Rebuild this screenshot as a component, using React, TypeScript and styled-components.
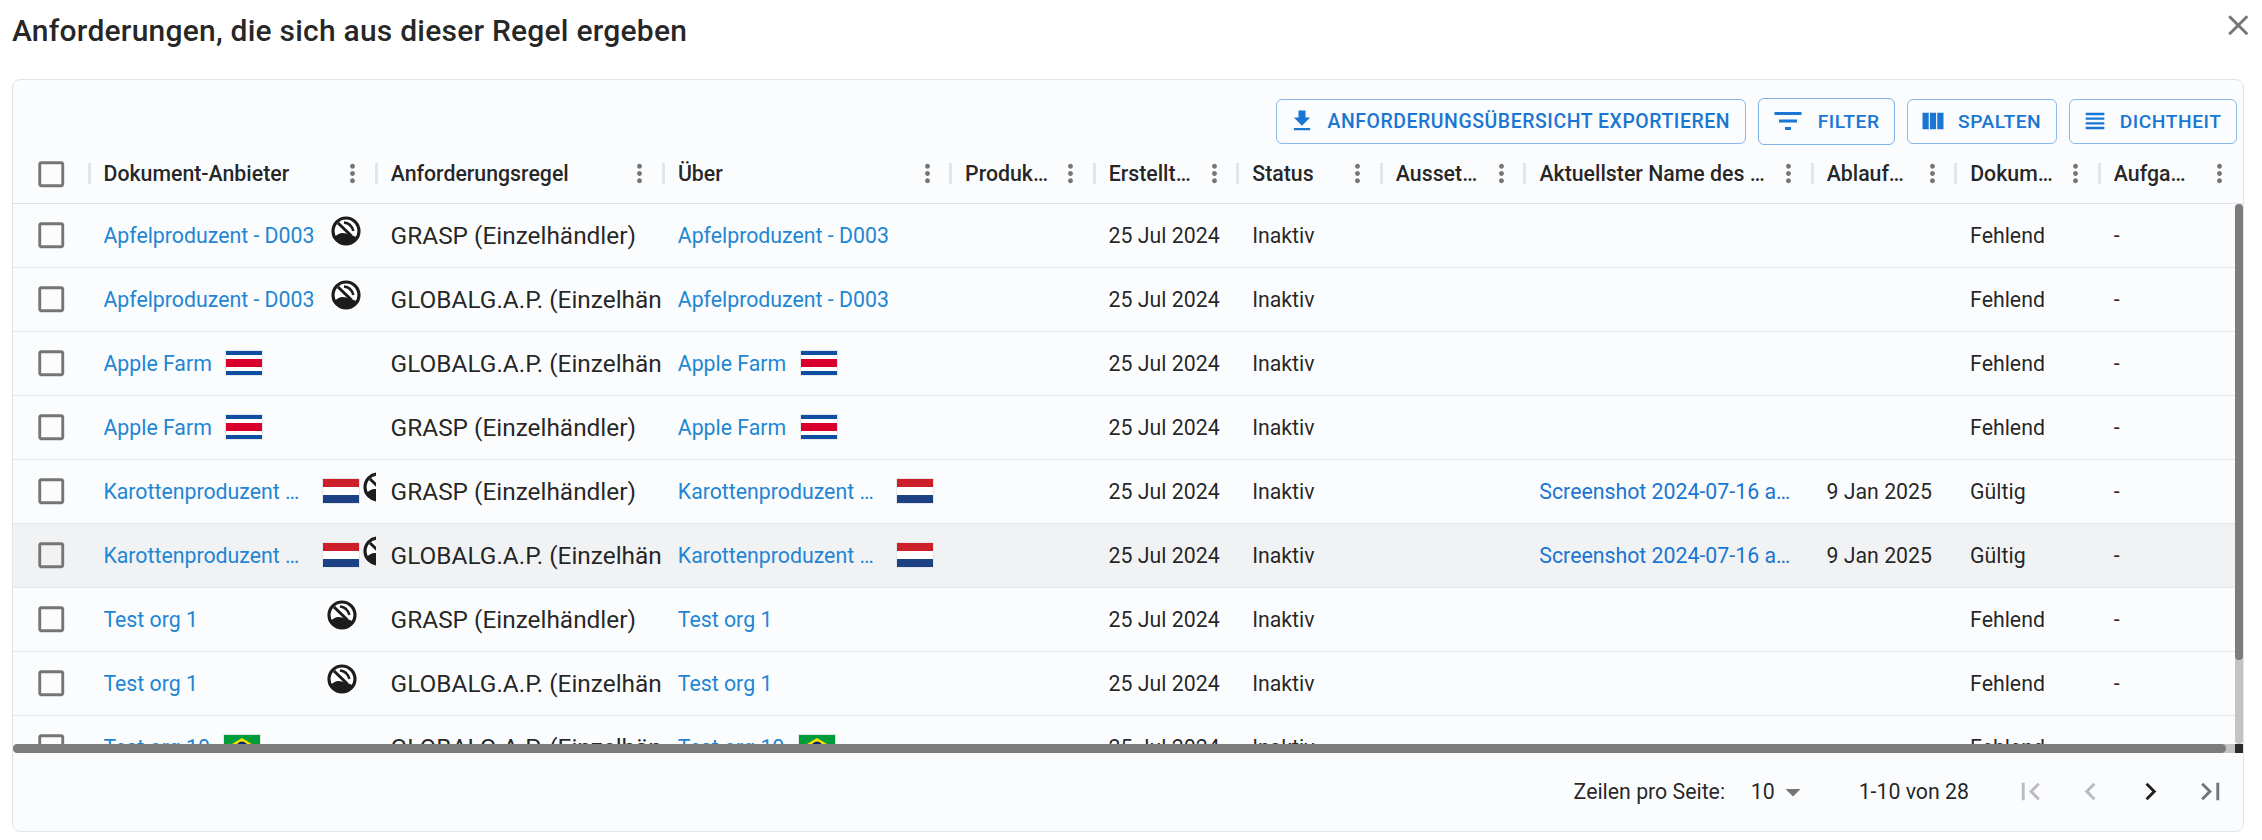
import styled, { createGlobalStyle } from 'styled-components'

const GlobalStyle = createGlobalStyle`
  html, body {
    margin: 0;
    padding: 0;
    background: #fff;
    font-family: Roboto, "Liberation Sans", sans-serif;
    color: rgba(0, 0, 0, 0.87);
  }
`

const COLUMNS = '76px 287.2px 287.2px 287.2px 143.6px 143.6px 143.6px 143.6px 287.2px 143.6px 143.6px 143.6px'

const Page = styled.div`
  width: 2262px;
  height: 840px;
  overflow: hidden;
  box-sizing: border-box;
  display: flex;
  flex-direction: column;
  padding: 0 18px 8px 12px;
`

const DialogHeader = styled.header`
  height: 79px;
  flex: none;
  display: flex;
  justify-content: space-between;
  align-items: flex-start;
  box-sizing: border-box;
`

const Title = styled.h2`
  margin: 11px 0 0;
  font-size: 30px;
  line-height: 40px;
  font-weight: 500;
  letter-spacing: 0.0075em;
  color: rgba(0, 0, 0, 0.87);
`

const CloseIcon = styled.svg`
  width: 34.5px;
  height: 34.5px;
  fill: #757575;
  margin: 8px -11px 0 0;
`

const Card = styled.section`
  flex: 1;
  min-height: 0;
  display: flex;
  flex-direction: column;
  background: #fbfcfe;
  border: 1.5px solid #e3e5e8;
  border-radius: 8px;
  overflow: hidden;
`

const Toolbar = styled.div`
  height: 65px;
  flex: none;
  display: flex;
  justify-content: flex-end;
  align-items: flex-start;
  gap: 12px;
  padding: 18.5px 6px 0 0;
  box-sizing: border-box;
`

const ToolButton = styled.button<{ $active?: boolean; $wide?: boolean }>`
  height: ${({ $active }) => ($active ? '47px' : '45px')};
  margin-top: ${({ $active }) => ($active ? '-1px' : '0')};
  display: inline-flex;
  align-items: center;
  gap: ${({ $active }) => ($active ? '12px' : '11px')};
  padding: 0 14.5px 0 11px;
  box-sizing: border-box;
  background: transparent;
  border: 1.4px solid ${({ $active }) => ($active ? 'rgba(25, 118, 210, 0.55)' : 'rgba(25, 118, 210, 0.5)')};
  border-radius: 6px;
  color: #1976d2;
  font-family: inherit;
  font-size: ${({ $wide }) => ($wide ? '19.45px' : '19.2px')};
  font-weight: 500;
  letter-spacing: 0.02857em;
  white-space: nowrap;

  svg {
    width: ${({ $active }) => ($active ? '36px' : '28px')};
    height: ${({ $active }) => ($active ? '36px' : '28px')};
    fill: currentColor;
    flex: none;
  }
`

const HeaderRow = styled.div`
  height: 58.5px;
  flex: none;
  display: grid;
  grid-template-columns: ${COLUMNS};
  border-bottom: 1.5px solid #e0e2e5;
  box-sizing: border-box;
`

const CheckCell = styled.div`
  display: flex;
  align-items: center;
  justify-content: center;
`

const CheckIcon = styled.svg`
  width: 34.5px;
  height: 34.5px;
  fill: #757575;
`

const HeaderCell = styled.div`
  min-width: 0;
  display: flex;
  align-items: center;
  padding-right: 9px;
  overflow: hidden;
  margin-left: -1.5px;
`

const Separator = styled.span`
  flex: none;
  width: 3px;
  height: 21px;
  background: #e4e5e7;
  margin-right: 13px;
`

const HeaderLabel = styled.span`
  flex: 1;
  min-width: 0;
  margin-right: 8px;
  font-size: 21.3px;
  font-weight: 500;
  white-space: nowrap;
  overflow: hidden;
  text-overflow: ellipsis;
`

const MenuIcon = styled.svg`
  flex: none;
  width: 29px;
  height: 29px;
  fill: #757575;
`

const Body = styled.div`
  position: relative;
  height: 549px;
  flex: none;
  overflow: hidden;
`

const Row = styled.div<{ $hovered?: boolean }>`
  height: 64px;
  display: grid;
  grid-template-columns: ${COLUMNS};
  background: ${({ $hovered }) => ($hovered ? '#f1f2f4' : 'transparent')};
  border-bottom: 1.5px solid #e3e5e8;
  box-sizing: border-box;
`

const Cell = styled.div`
  min-width: 0;
  display: flex;
  align-items: center;
  padding: 0 0 0 14.4px;
  overflow: hidden;
  white-space: nowrap;
  font-size: 21.3px;
`

const RuleText = styled.span`
  flex: none;
  width: 270.5px;
  overflow: hidden;
  font-size: 24.4px;
`

const OrgLink = styled.a`
  flex: none;
  color: #1f86d3;
  font-size: 21.3px;
  white-space: nowrap;
`

const TruncatedLink = styled(OrgLink)`
  width: 205px;
  padding-right: 6px;
  box-sizing: border-box;
  overflow: hidden;
  text-overflow: ellipsis;
`

const FileLink = styled(OrgLink)`
  width: 253px;
  overflow: hidden;
  text-overflow: ellipsis;
  color: #1976d2;
`

const FlagFrame = styled.svg`
  flex: none;
  width: 38px;
  height: 26px;
  margin-left: 13.5px;
  box-sizing: border-box;
  border: 1px solid #e4e6e8;
`

const Mark = styled.svg<{ $gap: number }>`
  flex: none;
  width: 30px;
  height: 30px;
  margin: 0 0 8px ${({ $gap }) => $gap}px;
`

const VerticalTrack = styled.div`
  position: absolute;
  top: 0;
  right: 0;
  width: 8.5px;
  height: 540px;
  background: #c3c3c3;
  border-radius: 4px;
`

const VerticalThumb = styled.div`
  height: 456px;
  background: #7b7c7b;
  border-radius: 4px;
`

const HorizontalTrack = styled.div`
  position: absolute;
  left: 0;
  right: 0;
  bottom: 0;
  height: 9px;
  display: flex;
  background: #c3c3c3;
  border-radius: 4px 0 0 4px;
`

const HorizontalThumb = styled.div`
  width: 2213px;
  background: #7b7c7b;
  border-radius: 4.5px;
`

const ScrollCorner = styled.div`
  margin-left: auto;
  width: 8.5px;
  background: #2a2a2a;
`

const Footer = styled.footer`
  flex: 1;
  display: flex;
  justify-content: flex-end;
  align-items: center;
  padding-right: 3px;
  font-size: 21.3px;
`

const PerPageLabel = styled.span`
  margin-right: 25.6px;
`

const PerPageSelect = styled.span`
  display: inline-flex;
  align-items: center;
  margin-right: 48px;

  svg {
    width: 36px;
    height: 36px;
    fill: #757575;
  }
`

const RangeLabel = styled.span`
  margin-right: 31px;
`

const PagerButton = styled.button<{ $tone: string }>`
  width: 60px;
  height: 57.5px;
  display: inline-flex;
  align-items: center;
  justify-content: center;
  padding: 0;
  background: none;
  border: none;
  fill: ${({ $tone }) => $tone};

  svg {
    width: 35px;
    height: 35px;
  }
`

const P = {
  close: 'M19 6.41 17.59 5 12 10.59 6.41 5 5 6.41 10.59 12 5 17.59 6.41 19 12 13.41 17.59 19 19 17.59 13.41 12z',
  check: 'M19 5v14H5V5h14m0-2H5c-1.1 0-2 .9-2 2v14c0 1.1.9 2 2 2h14c1.1 0 2-.9 2-2V5c0-1.1-.9-2-2-2z',
  menu: 'M12 8c1.1 0 2-.9 2-2s-.9-2-2-2-2 .9-2 2 .9 2 2 2zm0 2c-1.1 0-2 .9-2 2s.9 2 2 2 2-.9 2-2-.9-2-2-2zm0 6c-1.1 0-2 .9-2 2s.9 2 2 2 2-.9 2-2-.9-2-2-2z',
  download: 'M5 20h14v-2H5v2zM19 9h-4V3H9v6H5l7 7 7-7z',
  filter: 'M10 18h4v-2h-4v2zM3 6v2h18V6H3zm3 7h12v-2H6v2z',
  columns: 'M14.67 5v14H9.33V5h5.34zm1 14H21V5h-5.33v14zm-7.34 0V5H3v14h5.33z',
  density: 'M4 15h16v-2H4v2zm0 4h16v-2H4v2zm0-8h16V9H4v2zm0-6v2h16V5H4z',
  drop: 'M7 10l5 5 5-5z',
  first: 'M18.41 16.59 13.82 12l4.59-4.59L17 6l-6 6 6 6zM6 6h2v12H6z',
  prev: 'M15.41 7.41 14 6l-6 6 6 6 1.41-1.41L10.83 12z',
  next: 'M10 6 8.59 7.41 13.17 12l-4.58 4.59L10 18l6-6z',
  last: 'M5.59 7.41 10.18 12l-4.59 4.59L7 18l6-6-6-6zM16 6h2v12h-2z',
}

const Icon = ({ d }: { d: string }) => (
  <svg viewBox="0 0 24 24">
    <path d={d} />
  </svg>
)

const OrgMark = ({ gap }: { gap: number }) => (
  <Mark $gap={gap} viewBox="0 0 30 30">
    <circle cx="15" cy="15" r="13" fill="#fff" stroke="#1c1c1c" strokeWidth="3.2" />
    <path d="M3.5 21.5Q8 15.5 15 17.5Q21 19 26.5 21.5A13 13 0 0 1 3.5 21.5Z" fill="#1c1c1c" />
    <path d="M7 7L20.5 20" stroke="#1c1c1c" strokeWidth="3" fill="none" />
    <path d="M13 6.5Q20 7 22.5 15" stroke="#1c1c1c" strokeWidth="2.4" fill="none" />
  </Mark>
)

const CostaRica = () => (
  <FlagFrame viewBox="0 0 36 24" preserveAspectRatio="none">
    <rect width="36" height="24" fill="#fff" />
    <rect width="36" height="4" fill="#0b4ea2" />
    <rect y="8" width="36" height="8" fill="#d9002b" />
    <rect y="20" width="36" height="4" fill="#0b4ea2" />
  </FlagFrame>
)

const Netherlands = () => (
  <FlagFrame viewBox="0 0 36 24" preserveAspectRatio="none">
    <rect width="36" height="8" fill="#cd1f2a" />
    <rect y="8" width="36" height="8" fill="#fff" />
    <rect y="16" width="36" height="8" fill="#1d4185" />
  </FlagFrame>
)

const Brazil = () => (
  <FlagFrame viewBox="0 0 36 24" preserveAspectRatio="none">
    <rect width="36" height="24" fill="#009b3a" />
    <path d="M18 3L33 12L18 21L3 12Z" fill="#fedf00" />
    <circle cx="18" cy="12" r="5.5" fill="#002776" />
  </FlagFrame>
)

const flags = { cr: CostaRica, nl: Netherlands, br: Brazil }

type Org = {
  name: string
  truncate?: boolean
  flag?: keyof typeof flags
  markGap?: number
}

type RowData = Org & {
  rule: string
  file?: boolean
  hovered?: boolean
}

const RULE_A = 'GRASP (Einzelhändler)'
const RULE_B = 'GLOBALG.A.P. (Einzelhändler)'

const rows: RowData[] = [
  { name: 'Apfelproduzent - D003', markGap: 16, rule: RULE_A },
  { name: 'Apfelproduzent - D003', markGap: 16, rule: RULE_B },
  { name: 'Apple Farm', flag: 'cr', rule: RULE_B },
  { name: 'Apple Farm', flag: 'cr', rule: RULE_A },
  { name: 'Karottenproduzent - Niederlande', truncate: true, flag: 'nl', markGap: 3, rule: RULE_A, file: true },
  { name: 'Karottenproduzent - Niederlande', truncate: true, flag: 'nl', markGap: 3, rule: RULE_B, file: true, hovered: true },
  { name: 'Test org 1', markGap: 129.5, rule: RULE_A },
  { name: 'Test org 1', markGap: 129.5, rule: RULE_B },
  { name: 'Test org 10', flag: 'br', rule: RULE_B },
  { name: 'Test org 10', flag: 'br', rule: RULE_A },
]

const headers = [
  'Dokument-Anbieter',
  'Anforderungsregel',
  'Über',
  'Produktname',
  'Erstellt am',
  'Status',
  'Aussetzungsdatum',
  'Aktuellster Name des Dokuments',
  'Ablaufdatum',
  'Dokumentstatus',
  'Aufgaben',
]

const OrgName = ({ org, withMark }: { org: Org; withMark: boolean }) => {
  const Flag = org.flag ? flags[org.flag] : null
  const Name = org.truncate ? TruncatedLink : OrgLink
  return (
    <Cell>
      <Name>{org.name}</Name>
      {Flag && <Flag />}
      {withMark && org.markGap !== undefined && <OrgMark gap={org.markGap} />}
    </Cell>
  )
}

export default function App() {
  return (
    <Page>
      <GlobalStyle />
      <DialogHeader>
        <Title>Anforderungen, die sich aus dieser Regel ergeben</Title>
        <CloseIcon viewBox="0 0 24 24">
          <path d={P.close} />
        </CloseIcon>
      </DialogHeader>
      <Card>
        <Toolbar>
          <ToolButton $wide>
            <Icon d={P.download} />
            ANFORDERUNGSÜBERSICHT EXPORTIEREN
          </ToolButton>
          <ToolButton $active>
            <Icon d={P.filter} />
            FILTER
          </ToolButton>
          <ToolButton>
            <Icon d={P.columns} />
            SPALTEN
          </ToolButton>
          <ToolButton>
            <Icon d={P.density} />
            DICHTHEIT
          </ToolButton>
        </Toolbar>
        <HeaderRow>
          <CheckCell>
            <CheckIcon viewBox="0 0 24 24">
              <path d={P.check} />
            </CheckIcon>
          </CheckCell>
          {headers.map((label) => (
            <HeaderCell key={label}>
              <Separator />
              <HeaderLabel>{label}</HeaderLabel>
              <MenuIcon viewBox="0 0 24 24">
                <path d={P.menu} />
              </MenuIcon>
            </HeaderCell>
          ))}
        </HeaderRow>
        <Body>
          {rows.map((row, i) => (
            <Row key={i} $hovered={row.hovered}>
              <CheckCell>
                <CheckIcon viewBox="0 0 24 24">
                  <path d={P.check} />
                </CheckIcon>
              </CheckCell>
              <OrgName org={row} withMark />
              <Cell>
                <RuleText>{row.rule}</RuleText>
              </Cell>
              <OrgName org={row} withMark={false} />
              <Cell />
              <Cell>25 Jul 2024</Cell>
              <Cell>Inaktiv</Cell>
              <Cell />
              <Cell>{row.file && <FileLink>Screenshot 2024-07-16 at 10.42.17.png</FileLink>}</Cell>
              <Cell>{row.file && '9 Jan 2025'}</Cell>
              <Cell>{row.file ? 'Gültig' : 'Fehlend'}</Cell>
              <Cell>-</Cell>
            </Row>
          ))}
          <VerticalTrack>
            <VerticalThumb />
          </VerticalTrack>
          <HorizontalTrack>
            <HorizontalThumb />
            <ScrollCorner />
          </HorizontalTrack>
        </Body>
        <Footer>
          <PerPageLabel>Zeilen pro Seite:</PerPageLabel>
          <PerPageSelect>
            10
            <Icon d={P.drop} />
          </PerPageSelect>
          <RangeLabel>1-10 von 28</RangeLabel>
          <PagerButton $tone="rgba(0,0,0,0.26)">
            <Icon d={P.first} />
          </PagerButton>
          <PagerButton $tone="rgba(0,0,0,0.26)">
            <Icon d={P.prev} />
          </PagerButton>
          <PagerButton $tone="rgba(0,0,0,0.87)">
            <Icon d={P.next} />
          </PagerButton>
          <PagerButton $tone="rgba(0,0,0,0.54)">
            <Icon d={P.last} />
          </PagerButton>
        </Footer>
      </Card>
    </Page>
  )
}
